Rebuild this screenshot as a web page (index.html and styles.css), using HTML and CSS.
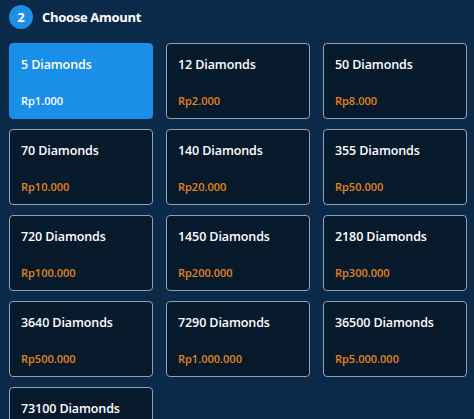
FILE: index.html
```html
<!DOCTYPE html>
<html lang="en">
<head>
    <meta charset="UTF-8">
    <title>Choose Amount</title>
    <link rel="stylesheet" href="styles.css">
</head>
<body>
<section class="step">
    <div class="step-header">
        <span class="step-number">2</span>
        <h2>Choose Amount</h2>
    </div>
    <div class="amount-grid">
        <div class="amount-card active">
            <div class="amount-name">5 Diamonds</div>
            <div class="amount-price">Rp1.000</div>
        </div>
        <div class="amount-card">
            <div class="amount-name">12 Diamonds</div>
            <div class="amount-price">Rp2.000</div>
        </div>
        <div class="amount-card">
            <div class="amount-name">50 Diamonds</div>
            <div class="amount-price">Rp8.000</div>
        </div>
        <div class="amount-card">
            <div class="amount-name">70 Diamonds</div>
            <div class="amount-price">Rp10.000</div>
        </div>
        <div class="amount-card">
            <div class="amount-name">140 Diamonds</div>
            <div class="amount-price">Rp20.000</div>
        </div>
        <div class="amount-card">
            <div class="amount-name">355 Diamonds</div>
            <div class="amount-price">Rp50.000</div>
        </div>
        <div class="amount-card">
            <div class="amount-name">720 Diamonds</div>
            <div class="amount-price">Rp100.000</div>
        </div>
        <div class="amount-card">
            <div class="amount-name">1450 Diamonds</div>
            <div class="amount-price">Rp200.000</div>
        </div>
        <div class="amount-card">
            <div class="amount-name">2180 Diamonds</div>
            <div class="amount-price">Rp300.000</div>
        </div>
        <div class="amount-card">
            <div class="amount-name">3640 Diamonds</div>
            <div class="amount-price">Rp500.000</div>
        </div>
        <div class="amount-card">
            <div class="amount-name">7290 Diamonds</div>
            <div class="amount-price">Rp1.000.000</div>
        </div>
        <div class="amount-card">
            <div class="amount-name">36500 Diamonds</div>
            <div class="amount-price">Rp5.000.000</div>
        </div>
        <div class="amount-card">
            <div class="amount-name">73100 Diamonds</div>
            <div class="amount-price">Rp10.000.000</div>
        </div>
    </div>
</section>
</body>
</html>
```

FILE: styles.css
```css
* {
    margin: 0;
    padding: 0;
    box-sizing: border-box;
}

body {
    background: #0b2a4a;
    font-family: 'Open Sans', 'Noto Sans', sans-serif;
    color: #ffffff;
}

.step {
    padding: 5px 7px 0 9px;
}

/* Header */
.step-header {
    display: flex;
    align-items: center;
    gap: 9px;
    height: 24px;
    margin-bottom: 14px;
}

.step-number {
    width: 24px;
    height: 24px;
    border-radius: 50%;
    background: #1e8fe6;
    display: flex;
    align-items: center;
    justify-content: center;
    font-size: 13px;
    font-weight: 700;
}

.step-header h2 {
    font-size: 13px;
    font-weight: 700;
    letter-spacing: -0.3px;
}

/* Cards */
.amount-grid {
    display: grid;
    grid-template-columns: repeat(3, 1fr);
    column-gap: 13px;
    row-gap: 10px;
}

.amount-card {
    height: 76px;
    padding: 12px 11px 10px;
    background: #071a2c;
    border: 1px solid #8fa3b8;
    border-radius: 4px;
    display: flex;
    flex-direction: column;
    justify-content: space-between;
}

.amount-card.active {
    background: #1a8fe8;
    border-color: #1a8fe8;
}

.amount-name {
    font-size: 12.5px;
    font-weight: 600;
    letter-spacing: -0.1px;
}

.amount-price {
    font-size: 11px;
    font-weight: 600;
    color: #e5831c;
}

.amount-card.active .amount-price {
    color: #ffffff;
}
```
